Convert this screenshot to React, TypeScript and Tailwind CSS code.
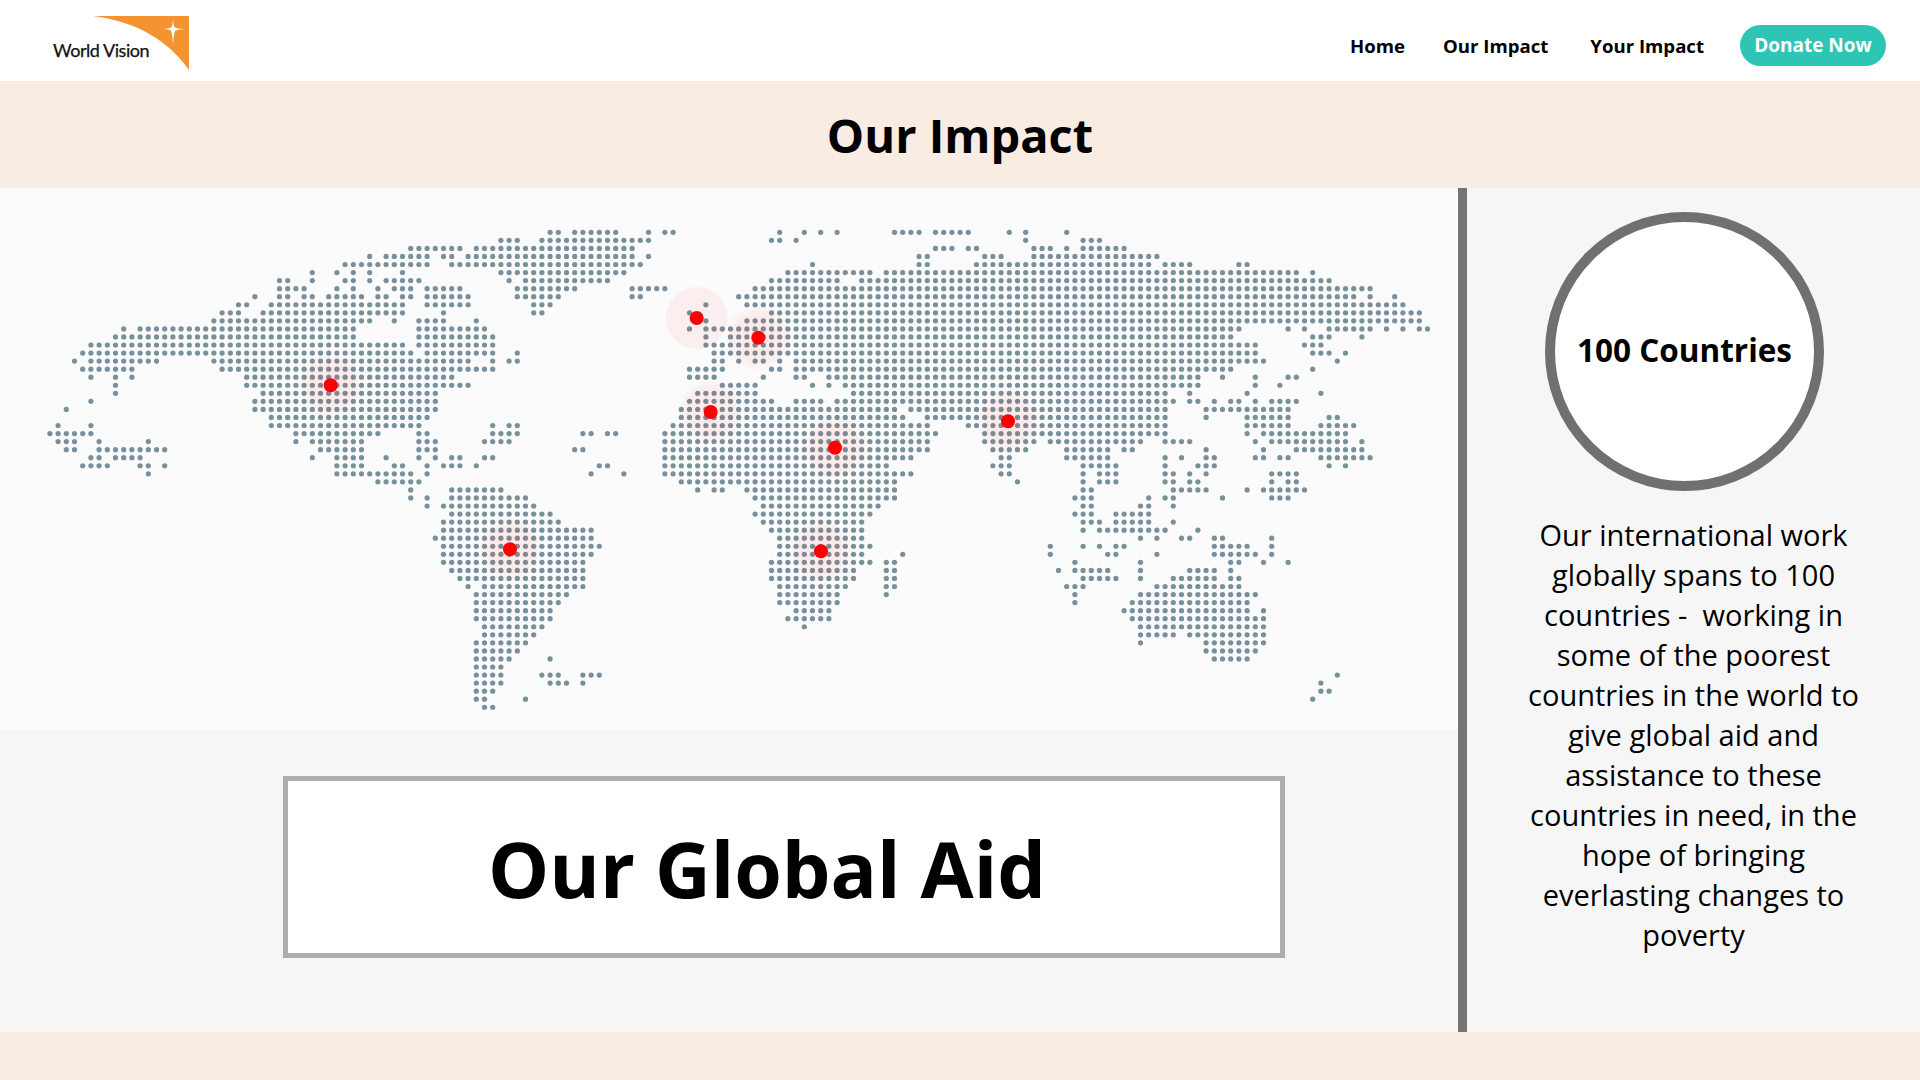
const rows = [
  "61-62 64-69 73 75-76 89 92 94 96 103-106 108-112 117 119 124",
  "55-57 60-73 88-89 91 119 126-128",
  "44-50 52-71 108-110 112-113 120-122 124 126-131",
  "39 41-46 48-49 51-71 73 106-107 114-116 120-135",
  "36-46 49-72 93 106-107 113-134 136-139 145-146",
  "32 35 37 39 43 55-70 90-100 102-152 154",
  "28-29 32 36-37 39 41-45 56 58-68 88-96 99-156",
  "28-31 35 37 40 42-44 46-50 57-64 71-75 86-161",
  "25 28-29 31-32 34-38 40-41 43-44 46-51 57-62 71-72 84-159 161 164",
  "23-24 27-43 46-51 59-61 80 85-165",
  "21-23 26-43 48 59-60 78 88-167",
  "20-39 42 45-48 52 80 85-167",
  "9 11-37 45-53 78 80-145 151 153 156-161 163 165 167-168",
  "8-37 45-54 80 83-144 154-156 160",
  "5-43 45-54 80-147 153-155",
  "4-44 46-54 57 81-147 154-156 158",
  "3 5-13 20-51 54 56-57 81-82 84 86-87 89 91-148 157",
  "4-10 21-54 78-82 88-89 91-144 154",
  "5 8 10 24-49 78-81 87 91-92 95-140 143 147 151-152",
  "8 24-51 82-86 93 95 97-140 147 150",
  "8 26-47 79-86 98-136 139 146 155",
  "5 25-47 78-88 91-94 96-137 139-140 142 144-145 147 149-152",
  "2 25-47 77-103 105-136 141-151",
  "27-46 77-104 107-136 141 146-151 156-157",
  "1 5 27-45 54 56-57 76-107 112-136 146-151 155-159",
  "0-5 30-40 45-46 54-57 65-66 68-69 75-108 114-136 146 148-158",
  "1-3 6 12 30 32-38 45-47 53-56 75-107 114-120 122-133 136-139 147 149-158 160",
  "2-3 6-14 33-38 45-47 64-65 75-107 115-119 124-129 131-132 141 148 152-160",
  "5-6 8-11 32 35-38 41 45 47 49-50 53-54 75-105 116-117 124-129 136 138 141-142 147-148 150-151 155-161",
  "4-7 11-12 14 35-38 42-43 46 48-50 52 67-68 75-102 115-117 126-130 136 140-142 156 158",
  "12 35-44 46 66 70 75-105 116-117 126 128-130 136-137 139 141 149-152",
  "40-45 77-103 118 126 128-130 136-137 139-140 149 151-152",
  "44 49-55 79 81-82 85-103 126-127 137-141 146 148-153",
  "44 46 49-58 86-103 125-127 134 136-137 143 149-151",
  "46 48-59 87-101 126-127 133-134 137",
  "49-61 86-100 125-127 130-134",
  "48-62 87-99 126-128 130-134 137",
  "48-66 88-99 126 128-136 140",
  "47-66 89-99 133 135 138-139 142-143 149",
  "48-67 89-100 122 126 128 130-131 142-146 149",
  "48-66 89-99 104 122 129-130 135 142-147 149",
  "48-65 88-100 102-103 125 133 144-145 148 151",
  "49-65 88-98 102-103 123 125-129 133 139-142 144",
  "50-65 88-98 102-103 126-130 133 137-142 144-145",
  "51 53-65 89-97 102-103 124-126 135-145",
  "52-63 89-96 102 125 133-147",
  "52-62 89-96 125 132-146",
  "52-61 91-95 131-146 148",
  "52-61 90-95 132-148",
  "53-60 92 133-148",
  "53-59 133-137 139-148",
  "52-58 133 141-148",
  "52-57 141-147",
  "52-56 61 142-146",
  "52-55",
  "52-55 60-62 65-67 157",
  "52-55 61-63 65 155",
  "52-54 155-156",
  "52-53 58 154",
  "53-54",
]

// x, y in map coordinates, flat = hard edged halo
const markers = [
  { x: 330.7, y: 197.3 },
  { x: 696.7, y: 130, flat: true },
  { x: 758.3, y: 149.7, r: 34 },
  { x: 710.7, y: 224 },
  { x: 835, y: 259.7 },
  { x: 1008, y: 233.3 },
  { x: 510, y: 361.3 },
  { x: 821, y: 363.3 },
]

function dots() {
  const out: { x: number; y: number }[] = []
  rows.forEach((row, r) => {
    row.split(" ").forEach((run) => {
      const [a, b] = run.split("-").map(Number)
      for (let c = a; c <= (b ?? a); c++) {
        out.push({ x: 49.9 + c * 8.2, y: 44.3 + r * 8.05 })
      }
    })
  })
  return out
}

function WorldMap() {
  return (
    <svg width="1458" height="542" viewBox="0 0 1458 542" className="block">
      <defs>
        <radialGradient id="halo">
          <stop offset="0%" stopColor="#ff0000" stopOpacity="0.08" />
          <stop offset="70%" stopColor="#ff0000" stopOpacity="0.06" />
          <stop offset="100%" stopColor="#ff0000" stopOpacity="0" />
        </radialGradient>
      </defs>
      {dots().map((d, i) => (
        <circle key={i} cx={d.x} cy={d.y} r="2.6" fill="#78909c" />
      ))}
      {markers.map((m, i) => (
        <g key={i}>
          {m.flat ? (
            <circle cx={m.x} cy={m.y} r="31" fill="#ff0000" fillOpacity="0.05" />
          ) : (
            <circle cx={m.x} cy={m.y} r={m.r ?? 33} fill="url(#halo)" />
          )}
          <circle cx={m.x} cy={m.y} r="7" fill="#ff0000" />
        </g>
      ))}
    </svg>
  )
}

function Logo() {
  return (
    <svg width="200" height="81" viewBox="0 0 200 81" className="block">
      <defs>
        <linearGradient id="star" x1="0" y1="0" x2="0" y2="1">
          <stop offset="0%" stopColor="#fff" />
          <stop offset="55%" stopColor="#fff" />
          <stop offset="100%" stopColor="#fff" stopOpacity="0.2" />
        </linearGradient>
      </defs>
      <path d="M93 16H189V70C170 43 140 22 93 16Z" fill="#f59331" />
      <path
        d="M173 19Q173.4 26.6 175 27.4Q177 28.6 185 29Q177 29.6 175.2 30.8Q174 32 173 47Q172 32 171 30.8Q169.4 29.6 163 29Q169.4 28.6 171 27.4Q172.6 26.6 173 19Z"
        fill="url(#star)"
      />
      <text
        x="53"
        y="57"
        fontFamily="Lato, sans-serif"
        fontSize="18"
        letterSpacing="-0.45"
        fill="#111"
        stroke="#111"
        strokeWidth="0.25"
      >
        World Vision
      </text>
    </svg>
  )
}

export default function App() {
  return (
    <div className="h-[1080px] flex flex-col overflow-hidden bg-white text-black font-['Open_Sans',sans-serif]">
      <header className="h-[81px] flex items-center justify-between pr-[34px]">
        <Logo />
        <nav className="flex items-center font-bold text-[18.6px] mt-[10px]">
          <a className="mt-[1px]">Home</a>
          <a className="ml-[38px] mt-[1px]">Our Impact</a>
          <a className="ml-[42px] mt-[1px]">Your Impact</a>
          <a className="ml-[36px] w-[146px] h-[41px] rounded-[21px] bg-[#2fc5b5] text-white text-[19px] font-bold flex items-center justify-center">
            Donate Now
          </a>
        </nav>
      </header>

      <div className="h-[107px] bg-[#f9ece2] flex items-center justify-center pt-[2px]">
        <h1 className="text-[47px] font-bold">Our Impact</h1>
      </div>

      <main className="flex-1 flex">
        <div className="w-[1458px] flex flex-col bg-[#f6f6f6]">
          <div className="h-[542px] bg-[#fbfbfb]">
            <WorldMap />
          </div>
          <div className="pt-[46px] pl-[283px]">
            <div className="w-[1002px] h-[182px] border-[5px] border-[#adadad] bg-white flex items-center justify-center pr-[34px] pt-[2px]">
              <h2 className="text-[77px] font-bold leading-none">Our Global Aid</h2>
            </div>
          </div>
        </div>
        <div className="w-[9px] bg-[#757575]" />
        <aside className="flex-1 flex flex-col items-center bg-[#f6f6f6] pt-[24px]">
          <div className="self-start ml-[78px] w-[279px] h-[279px] rounded-full border-[10px] border-[#707070] bg-white flex items-center justify-center pb-[4px]">
            <span className="text-[31.5px] font-bold">100 Countries</span>
          </div>
          <p className="mt-[24px] text-center text-[29px] leading-[40px]">
            Our international work
            <br />
            globally spans to 100
            <br />
            countries -&nbsp; working in
            <br />
            some of the poorest
            <br />
            countries in the world to
            <br />
            give global aid and
            <br />
            assistance to these
            <br />
            countries in need, in the
            <br />
            hope of bringing
            <br />
            everlasting changes to
            <br />
            poverty
          </p>
        </aside>
      </main>

      <div className="h-[48px] bg-[#f9ece2]" />
    </div>
  )
}
